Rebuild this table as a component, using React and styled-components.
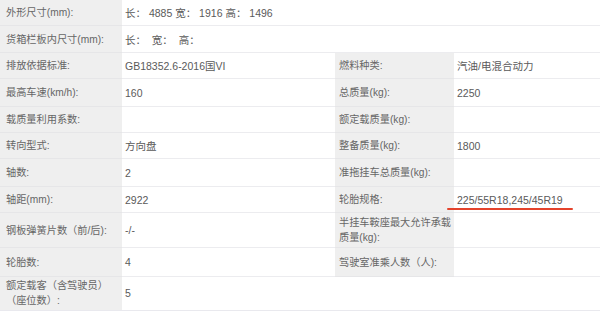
import React from 'react';
import styled, { createGlobalStyle } from 'styled-components';

const GlobalStyle = createGlobalStyle`
  html, body {
    margin: 0;
    padding: 0;
    background: #ffffff;
  }
  body {
    font-family: "Liberation Sans", "Noto Sans CJK SC", sans-serif;
  }
`;

const Sheet = styled.div`
  width: 600px;
  height: 313px;
  overflow: hidden;
  background: #fff;
`;

const Table = styled.div`
  display: grid;
  grid-template-columns: 122px 213px 119px 1fr;
  grid-template-rows: 26px 27px 26px 28px 26px 26px 28px 26px 35px 29px 33px;
  border-bottom: 1px solid #e9e9ee;
`;

const Label = styled.div`
  grid-column: span ${(p) => p.span || 1};
  display: flex;
  align-items: center;
  padding: 0 2px 0 ${(p) => (p.right ? 4 : 6)}px;
  background: #efefef;
  border-bottom: 1px solid ${(p) => (p.last ? 'transparent' : '#e6e6e8')};
  color: #666;
  font-size: 10.2px;
  line-height: 15px;
  box-sizing: border-box;
`;

const Value = styled.div`
  grid-column: span ${(p) => p.span || 1};
  position: relative;
  display: flex;
  align-items: center;
  padding-left: 3px;
  background: #fff;
  border-bottom: 1px solid ${(p) => (p.last ? 'transparent' : '#ececef')};
  color: #5a5a5a;
  font-size: 10.5px;
  box-sizing: border-box;
  white-space: pre;
`;

// red hand-drawn underline annotation over the tyre spec
const Marked = styled.span`
  &::after {
    content: '';
    position: absolute;
    left: -7px;
    width: 126px;
    top: 21px;
    height: 2px;
    border-radius: 1px;
    background: #e4432c;
  }
`;

const rows = [
  { l: '外形尺寸(mm):', v: '长： 4885 宽： 1916 高： 1496', full: true },
  { l: '货箱栏板内尺寸(mm):', v: '长：  宽：  高：', full: true },
  { l: '排放依据标准:', v: 'GB18352.6-2016国VI', rl: '燃料种类:', rv: '汽油/电混合动力' },
  { l: '最高车速(km/h):', v: '160', rl: '总质量(kg):', rv: '2250' },
  { l: '载质量利用系数:', v: '', rl: '额定载质量(kg):', rv: '' },
  { l: '转向型式:', v: '方向盘', rl: '整备质量(kg):', rv: '1800' },
  { l: '轴数:', v: '2', rl: '准拖挂车总质量(kg):', rv: '' },
  { l: '轴距(mm):', v: '2922', rl: '轮胎规格:', rv: '225/55R18,245/45R19', mark: true },
  { l: '钢板弹簧片数（前/后):', v: '-/-', rl: ['半挂车鞍座最大允许承载', <br key="br" />, '质量(kg):'], rv: '' },
  { l: '轮胎数:', v: '4', rl: '驾驶室准乘人数（人):', rv: '' },
  { l: ['额定载客（含驾驶员）', <br key="br" />, '（座位数）:'], v: '5', full: true, last: true },
];

const App = () => {
  return (
    <Sheet>
      <GlobalStyle />
      <Table>
        {rows.map((r, i) =>
          r.full ? (
            <React.Fragment key={i}>
              <Label last={r.last}>
                <span>{r.l}</span>
              </Label>
              <Value span={3} last={r.last}>{r.v}</Value>
            </React.Fragment>
          ) : (
            <React.Fragment key={i}>
              <Label>{r.l}</Label>
              <Value>{r.v}</Value>
              <Label right>
                <span>{r.rl}</span>
              </Label>
              <Value>{r.mark ? <Marked>{r.rv}</Marked> : r.rv}</Value>
            </React.Fragment>
          )
        )}
      </Table>
    </Sheet>
  );
};

export default App;
